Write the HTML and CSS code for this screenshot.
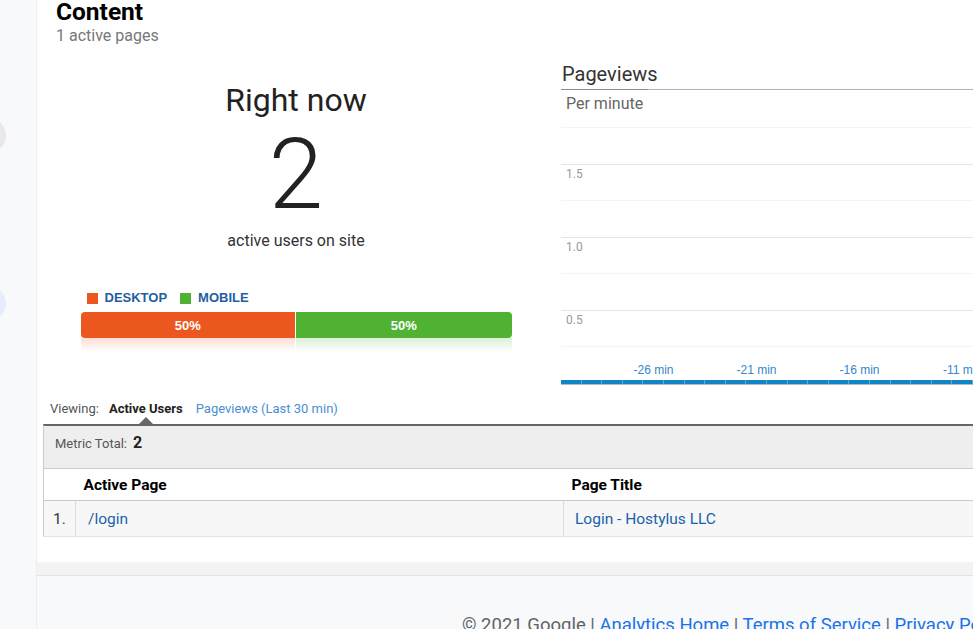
FILE: index.html
```html
<!DOCTYPE html>
<html lang="en">
<head>
<meta charset="utf-8">
<title>Real-Time Content</title>
<link rel="stylesheet" href="styles.css">
</head>
<body>
<div class="app">
  <aside class="sidebar">
    <span class="dot dot-gray"></span>
    <span class="dot dot-blue"></span>
  </aside>
  <main class="main">
    <section class="panel">
      <header class="head">
        <h1 class="title">Content</h1>
        <div class="subtitle">1 active pages</div>
      </header>
      <div class="overview">
        <div class="now">
          <div class="now-title">Right now</div>
          <div class="now-num">2</div>
          <div class="now-sub">active users on site</div>
          <div class="split-wrap">
            <div class="legend">
              <span class="lg"><i class="sw sw-desk"></i>DESKTOP</span>
              <span class="lg"><i class="sw sw-mob"></i>MOBILE</span>
            </div>
            <div class="split">
              <div class="seg seg-desk" style="width:50%">50%</div>
              <div class="seg seg-mob" style="width:50%">50%</div>
            </div>
            <div class="reflect">
              <div class="rf rf-desk" style="width:50%"></div>
              <div class="rf rf-mob" style="width:50%"></div>
            </div>
          </div>
        </div>
        <div class="chart">
          <div class="chart-title">Pageviews</div>
          <div class="chart-rule"></div>
          <div class="gr gr-head">Per minute</div>
          <div class="gr gr-light gr-tall"></div>
          <div class="gr gr-dark"><span class="yl">1.5</span></div>
          <div class="gr gr-light gr-tall"></div>
          <div class="gr gr-dark"><span class="yl">1.0</span></div>
          <div class="gr gr-light gr-tall"></div>
          <div class="gr gr-dark"><span class="yl">0.5</span></div>
          <div class="xaxis">
            <span class="xl">-26 min</span>
            <span class="xl">-21 min</span>
            <span class="xl">-16 min</span>
            <span class="xl">-11 min</span>
          </div>
          <div class="xbar"></div>
        </div>
      </div>
      <div class="tabs">
        <span class="tab-label">Viewing:</span>
        <span class="tab tab-active">Active Users</span>
        <span class="tab tab-link">Pageviews (Last 30 min)</span>
      </div>
      <div class="metric"><span class="metric-label">Metric Total:</span><b class="metric-val">2</b></div>
      <table class="tbl">
        <colgroup><col class="c1"><col class="c2"><col class="c3"></colgroup>
        <thead>
          <tr><th></th><th>Active Page</th><th>Page Title</th></tr>
        </thead>
        <tbody>
          <tr><td class="idx">1.</td><td class="lnk lnk-page">/login</td><td class="lnk lnk-title">Login - Hostylus LLC</td></tr>
        </tbody>
      </table>
    </section>
    <div class="band"></div>
    <footer class="footer">
      <span>© 2021 Google</span> | <a href="#">Analytics Home</a> | <a href="#">Terms of Service</a> | <a href="#">Privacy Policy</a> | <a href="#">Send Feedback</a>
    </footer>
  </main>
</div>
</body>
</html>
```
FILE: styles.css
```css
html, body {
  margin: 0;
  padding: 0;
}
body {
  background: #f8f9fa;
  font-family: Roboto, "Liberation Sans", Arial, sans-serif;
  overflow: hidden;
  color: #222;
}
.app {
  display: flex;
  height: 629px;
}
.sidebar {
  width: 37px;
  flex: none;
  box-sizing: border-box;
  border-right: 1px solid #eceef1;
  display: flex;
  flex-direction: column;
  padding-top: 118px;
}
.dot {
  display: block;
  width: 35px;
  height: 35px;
  border-radius: 50%;
  margin-left: -29px;
}
.dot-gray { background: #e8e8ea; }
.dot-blue { background: #e5edfc; margin-top: 133px; }

.main {
  flex: 1;
  min-width: 0;
  overflow: hidden;
}
.panel {
  background: #fff;
  height: 562px;
  width: 1000px;
}
.head {
  padding-left: 19px;
}
.title {
  margin: 0;
  font-size: 24.5px;
  line-height: 24px;
  font-weight: 700;
  color: #000;
}
.subtitle {
  font-size: 16px;
  line-height: 24px;
  color: #777;
}

.overview {
  display: grid;
  grid-template-columns: 518px 440px;
  column-gap: 6px;
}
.now {
  display: flex;
  flex-direction: column;
  align-items: center;
}
.now-title {
  margin-top: 33px;
  font-size: 32px;
  line-height: 38px;
  font-weight: 400;
  color: #222;
}
.now-num {
  margin-top: 7px;
  font-size: 98px;
  line-height: 98px;
  font-weight: 300;
  color: #222;
}
.now-sub {
  margin-top: 7px;
  font-size: 16px;
  line-height: 20px;
  color: #333;
}
.split-wrap {
  width: 431px;
  margin-top: 39px;
}
.legend {
  display: flex;
  padding-left: 6px;
  font-family: "Liberation Sans", Arial, sans-serif;
  font-size: 13px;
  line-height: 16px;
  font-weight: 700;
  color: #1f5f9f;
}
.lg {
  display: flex;
  align-items: center;
  margin-right: 13px;
}
.sw {
  width: 11px;
  height: 11px;
  margin-right: 7px;
}
.sw-desk { background: #eb571e; }
.sw-mob { background: #4fb233; }
.split {
  display: flex;
  margin-top: 6px;
  height: 26px;
  border-radius: 4px;
  overflow: hidden;
}
.seg {
  box-sizing: border-box;
  display: flex;
  align-items: center;
  justify-content: center;
  font-family: "Liberation Sans", Arial, sans-serif;
  font-size: 13px;
  font-weight: 700;
  color: #fff;
}
.seg-desk { background: #eb571e; border-right: 1px solid #fff; }
.seg-mob { background: #4fb233; }
.reflect {
  display: flex;
  height: 14px;
}
.rf { box-sizing: border-box; }
.rf-desk {
  background: linear-gradient(to bottom, rgba(235, 87, 30, 0.2), rgba(235, 87, 30, 0));
  border-right: 1px solid #fff;
}
.rf-mob {
  background: linear-gradient(to bottom, rgba(79, 178, 51, 0.2), rgba(79, 178, 51, 0));
}

.chart {
  padding-top: 14px;
}
.chart-title {
  font-size: 20px;
  line-height: 24px;
  color: #333;
  padding-left: 1px;
}
.chart-rule {
  margin-top: 3px;
  height: 1px;
  background: linear-gradient(to right, #8e8e8e 87px, #b4b4b4 87px);
}
.gr {
  box-sizing: border-box;
  height: 36px;
  border-top: 1px solid #e4e4e4;
}
.gr-tall { height: 37px; }
.gr-light { border-top-color: #f4f4f4; }
.gr-head {
  height: 37px;
  border-top: 0;
  padding: 4px 0 0 5px;
  font-size: 16px;
  line-height: 20px;
  color: #666;
}
.yl {
  display: block;
  padding: 2px 0 0 5px;
  font-size: 12px;
  line-height: 14px;
  color: #999;
}
.xaxis {
  box-sizing: border-box;
  height: 34px;
  border-top: 1px solid #f4f4f4;
  display: flex;
  padding: 16px 0 0 41px;
  font-family: "Liberation Sans", Arial, sans-serif;
  font-size: 12px;
  line-height: 14px;
  color: #3588c9;
  white-space: nowrap;
}
.xl {
  flex: none;
  width: 103px;
  text-align: center;
}
.xbar {
  height: 4px;
  border-bottom: 1px solid #b9b9b9;
  background: repeating-linear-gradient(to right, #1184c6 0, #1184c6 19.6px, #5ea9d8 19.6px, #5ea9d8 20.6px);
}

.tabs {
  display: flex;
  padding: 16px 0 7px 13px;
  font-size: 13px;
  line-height: 16px;
}
.tab-label { color: #555; }
.tab { margin-left: 10px; }
.tab-active {
  position: relative;
  font-weight: 700;
  color: #222;
}
.tab-active::after {
  content: "";
  position: absolute;
  left: 50%;
  top: 16px;
  margin-left: -7px;
  border-left: 7px solid transparent;
  border-right: 7px solid transparent;
  border-bottom: 7px solid #666;
}
.tab-link {
  margin-left: 13px;
  color: #4a8fcf;
}

.metric {
  margin-left: 6px;
  height: 45px;
  box-sizing: border-box;
  border-top: 2px solid #666;
  border-left: 1px solid #ccc;
  border-bottom: 1px solid #ccc;
  background: #eee;
  display: flex;
  align-items: baseline;
  padding: 9px 0 0 11px;
  line-height: 16px;
}
.metric-label {
  font-size: 13px;
  color: #555;
  margin-right: 6px;
}
.metric-val {
  font-size: 16px;
  font-weight: 700;
  color: #222;
}

.tbl {
  margin-left: 6px;
  width: 951px;
  table-layout: fixed;
  border-collapse: collapse;
  border-left: 1px solid #ccc;
  font-size: 15.5px;
}
.c1 { width: 32px; }
.c2 { width: 488px; }
.tbl th {
  height: 31px;
  padding: 0 0 0 8px;
  text-align: left;
  font-weight: 700;
  color: #000;
  border-bottom: 1px solid #c8c8c8;
}
.tbl td {
  height: 35px;
  padding: 0;
  background: #f7f7f7;
  border-bottom: 1px solid #e2e2e2;
}
.tbl td + td {
  border-left: 1px solid #dcdcdc;
}
.idx {
  text-align: center;
  color: #333;
}
.lnk { color: #1a62a8; }
.lnk-page { padding-left: 12px !important; }
.lnk-title { padding-left: 11px !important; }

.band {
  width: 1000px;
  height: 13px;
  background: #f3f3f3;
  border-bottom: 1px solid #e2e2e2;
}
.footer {
  padding: 38px 0 0 425px;
  font-size: 18.5px;
  line-height: 22px;
  color: #5f6368;
  white-space: nowrap;
}
.footer a {
  color: #1a73e8;
  text-decoration: none;
}
```
